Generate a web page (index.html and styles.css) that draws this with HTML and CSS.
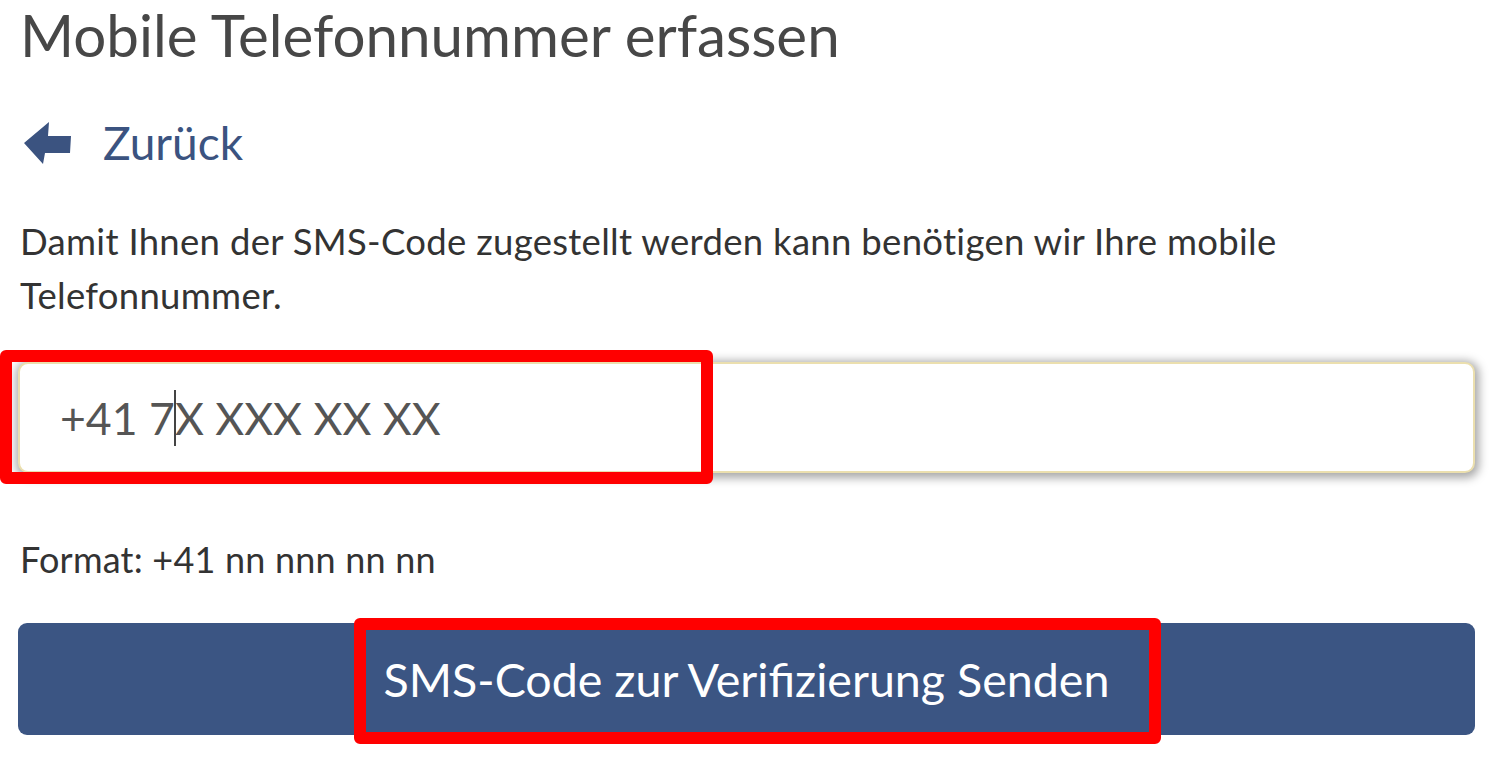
FILE: index.html
```html
<!DOCTYPE html>
<html lang="de">
<head>
<meta charset="utf-8">
<title>Mobile Telefonnummer erfassen</title>
<link rel="stylesheet" href="styles.css">
</head>
<body>
<div class="page">
  <h1 class="title">Mobile Telefonnummer erfassen</h1>
  <a class="back" href="#">
    <svg class="back-icon" width="50" height="44" viewBox="0 0 50 44" aria-hidden="true">
      <polygon points="1,22 26,1 25,15 48,15 47,32 22,32 20,43" fill="#3b5380"/>
    </svg>
    <span class="back-text">Zurück</span>
  </a>
  <p class="intro">Damit Ihnen der SMS-Code zugestellt werden kann benötigen wir Ihre mobile Telefonnummer.</p>
  <div class="field">
    <div class="field-input"><span>+41 7</span><span class="caret"></span><span>X XXX XX XX</span></div>
  </div>
  <p class="hint">Format: +41 nn nnn nn nn</p>
  <button class="submit" type="button">SMS-Code zur Verifizierung Senden</button>
  <div class="mark mark-input"></div>
  <div class="mark mark-button"></div>
</div>
</body>
</html>
```

FILE: styles.css
```css
html, body {
  margin: 0;
  padding: 0;
  background: #ffffff;
}

body {
  font-family: Lato, "Open Sans", "Liberation Sans", sans-serif;
  color: #333333;
}

.page {
  position: relative;
  width: 1457px;
  margin-left: 18px;
  padding-top: 5px;
  height: 756px;
}

.title {
  margin: 0;
  padding-left: 2px;
  font-size: 58.3px;
  line-height: 58px;
  font-weight: 400;
  color: #474747;
}

.back {
  display: flex;
  align-items: center;
  height: 50px;
  margin-top: 55px;
  text-decoration: none;
  color: #3b5380;
}

.back-icon {
  margin-left: 5px;
  flex: none;
}

.back-text {
  margin-left: 30px;
  font-size: 46px;
  line-height: 50px;
}

.intro {
  margin: 46px 0 0 2px;
  font-size: 36.5px;
  letter-spacing: 0.3px;
  line-height: 54px;
  color: #333333;
  max-width: 1320px;
}

.field {
  margin-top: 40px;
  height: 111px;
  box-sizing: border-box;
  border: 2px solid #ebdfae;
  border-radius: 10px;
  box-shadow: 1px 2px 10px 3px rgba(0, 0, 0, 0.35);
  background: #ffffff;
  display: flex;
  align-items: center;
  padding-left: 40px;
}

.field-input {
  font-size: 44.6px;
  color: #555555;
  display: flex;
  align-items: center;
  white-space: pre;
}

.caret {
  width: 2px;
  height: 56px;
  background: #444444;
  margin: 0 -1px;
}

.hint {
  margin: 59px 0 0 2px;
  font-size: 36px;
  letter-spacing: 0.2px;
  line-height: 54px;
  color: #333333;
}

.submit {
  display: block;
  width: 100%;
  height: 112px;
  margin-top: 37px;
  border: none;
  border-radius: 9px;
  background: #3b5583;
  color: #ffffff;
  font-family: Lato, "Open Sans", "Liberation Sans", sans-serif;
  font-size: 46.6px;
  padding: 0;
}

.mark {
  position: absolute;
  box-sizing: border-box;
  border: 12px solid #ff0000;
  border-radius: 6px;
}

.mark-input {
  left: -18px;
  top: 350px;
  width: 713px;
  height: 134px;
}

.mark-button {
  left: 336px;
  top: 618px;
  width: 807px;
  height: 126px;
}
```
